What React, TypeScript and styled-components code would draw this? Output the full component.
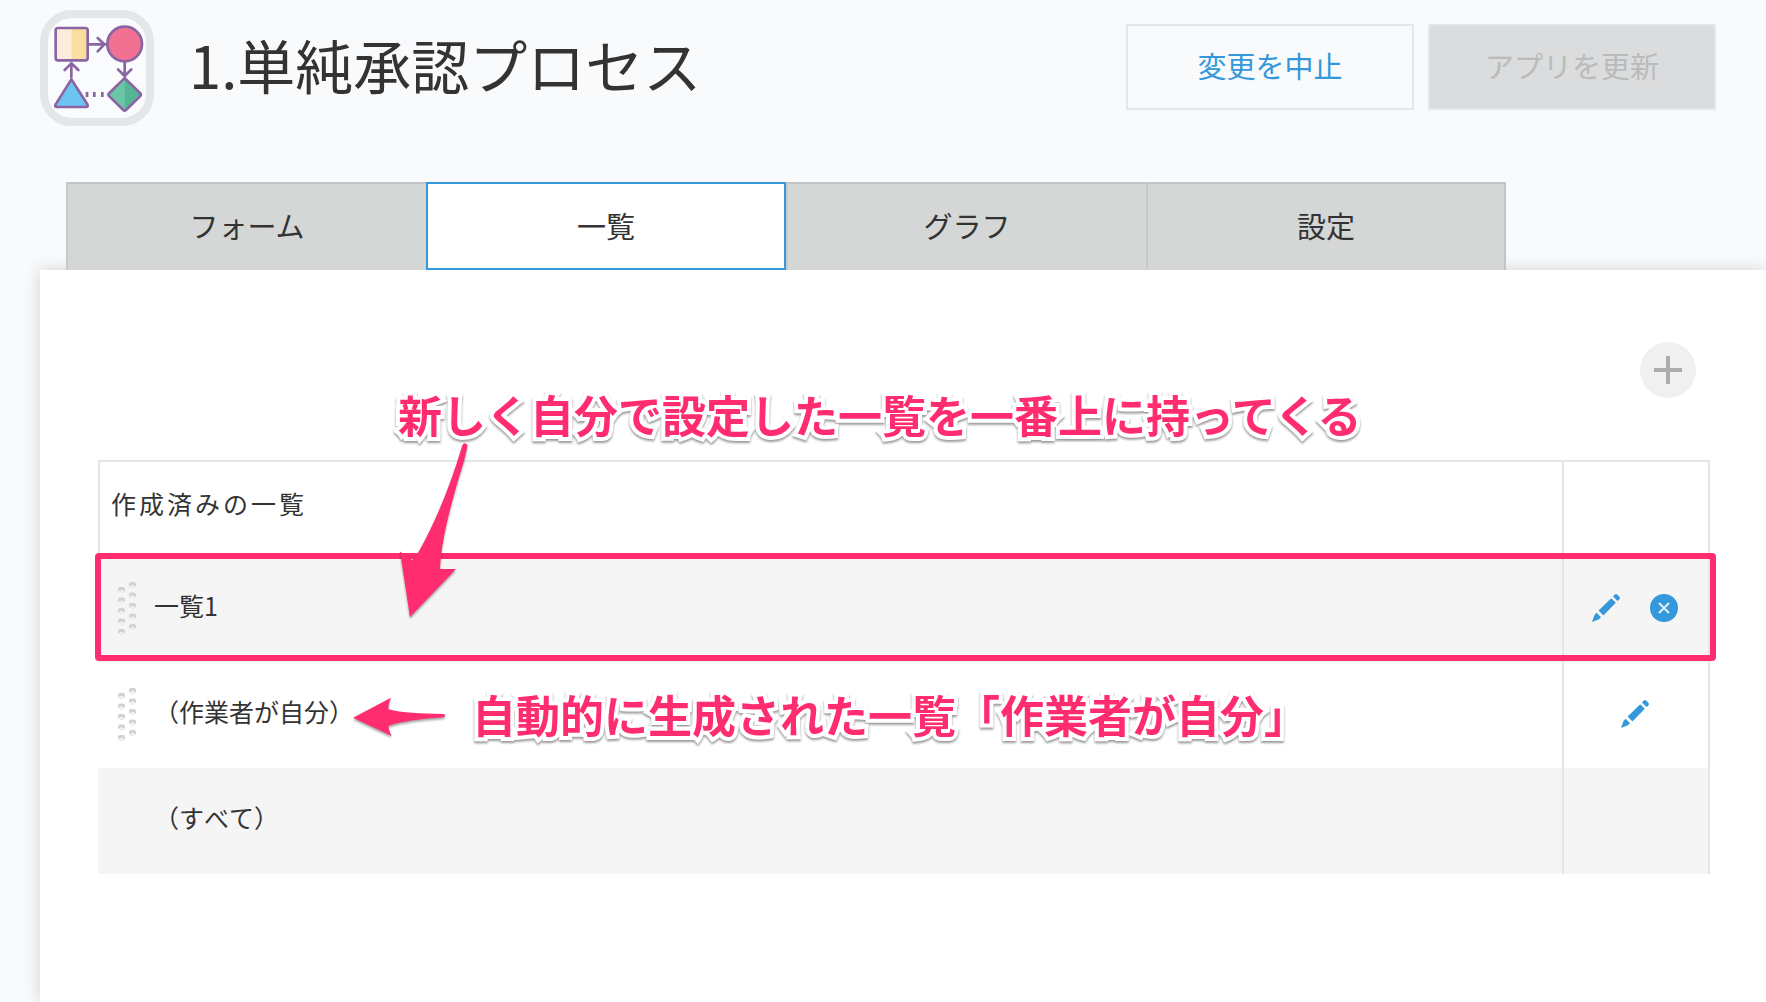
import React from "react";
import styled, { createGlobalStyle } from "styled-components";

const GlobalStyle = createGlobalStyle`
  *, *::before, *::after { box-sizing: border-box; }
  html, body { margin: 0; background: #f9fafc; }
  body {
    color: #333;
    font-family: "Noto Sans CJK JP", sans-serif;
    font-kerning: none;
    overflow-x: hidden;
  }
  button { font-family: inherit; margin: 0; padding: 0; }
`;

const blue = "#3498db";
const pink = "#ff2d6f";
const line = "#e3e7e8";

const Page = styled.div`
  display: flex;
  flex-direction: column;
  min-height: 100vh;
`;

const Header = styled.header`
  display: flex;
  align-items: flex-start;
  padding: 10px 50px 56px 40px;
`;

const AppIcon = styled.svg`
  display: block;
  flex: none;
  width: 114px;
  height: 116px;
`;

const Title = styled.h1`
  flex: 1;
  margin: 0 0 0 35px;
  font-size: 58px;
  font-weight: 400;
  line-height: 108px;
  white-space: nowrap;
`;

const Actions = styled.div`
  display: flex;
  gap: 14px;
  padding-top: 14px;
`;

const ActionButton = styled.button<{ $muted?: boolean }>`
  width: 288px;
  height: 86px;
  padding-bottom: 4px;
  border: 2px solid ${line};
  background: ${(p) => (p.$muted ? "#dbdcdd" : "transparent")};
  color: ${(p) => (p.$muted ? "#b9bbbb" : blue)};
  font-size: 29px;
  line-height: 40px;
`;

const Tabs = styled.nav`
  display: grid;
  grid-template-columns: repeat(4, 1fr);
  width: 1440px;
  max-width: calc(100% - 66px);
  margin-left: 66px;
`;

const Tab = styled.button<{ $active?: boolean }>`
  height: 88px;
  padding-bottom: ${(p) => (p.$active ? "2px" : "4px")};
  border: 2px solid ${(p) => (p.$active ? blue : "#c1c5c5")};
  border-left-color: ${(p) => (p.$active ? blue : "#c6caca")};
  border-right-width: ${(p) => (p.$active ? "2px" : "0")};
  border-bottom-width: ${(p) => (p.$active ? "2px" : "0")};
  background: ${(p) => (p.$active ? "#fff" : "#d4d7d6")};
  color: #333;
  font-size: 29px;
  line-height: 40px;
  &:last-child { border-right-width: 2px; }
`;

const Panel = styled.main`
  flex: 1;
  margin-left: 40px;
  padding: 72px 56px 56px 58px;
  background: #fff;
  box-shadow: 0 0 16px rgba(0, 0, 0, 0.16);
`;

const TabStrip = styled.div`
  position: relative;
  z-index: 1;
`;

const Toolbar = styled.div`
  display: flex;
  justify-content: flex-end;
  padding: 0 14px 62px 0;
`;

const AddButton = styled.button`
  display: grid;
  place-items: center;
  width: 56px;
  height: 56px;
  border: 0;
  border-radius: 50%;
  background: #f0f0f0;
`;

const ListArea = styled.div`
  position: relative;
`;

const ViewTable = styled.table`
  width: 100%;
  table-layout: fixed;
  border-collapse: separate;
  border-spacing: 0;
  font-size: 25px;
  line-height: 36px;
`;

const HeadCell = styled.th<{ $actions?: boolean }>`
  width: ${(p) => (p.$actions ? "148px" : "auto")};
  height: 96px;
  padding: 0 0 12px 11px;
  border: 2px solid ${line};
  border-width: ${(p) => (p.$actions ? "2px 2px 0 2px" : "2px 0 0 2px")};
  font-weight: 400;
  letter-spacing: 3px;
  text-align: left;
`;

const Row = styled.tr<{ $shaded?: boolean }>`
  background: ${(p) => (p.$shaded ? "#f5f5f5" : "#fff")};
`;

const NameCell = styled.td`
  height: 106px;
  padding: 0 0 0 20px;
`;

const ActionCell = styled.td`
  padding: 0 2px 2px 0;
  border: solid ${line};
  border-width: 0 2px;
`;

const NameLine = styled.div`
  display: flex;
  align-items: center;
  gap: 18px;
`;

const HandleSlot = styled.span`
  display: block;
  width: 18px;
  height: 54px;
`;

const ViewName = styled.span`
  padding-bottom: 8px;
`;

const IconGroup = styled.div`
  display: flex;
  justify-content: center;
  gap: 30px;
`;

const IconButton = styled.button`
  display: block;
  width: 28px;
  height: 28px;
  border: 0;
  background: none;
  svg { display: block; }
`;

const Highlight = styled.div`
  position: absolute;
  top: 93px;
  left: -3px;
  right: -6px;
  height: 108px;
  border: 6px solid ${pink};
  border-radius: 4px;
  pointer-events: none;
`;

const Note = styled.p<{ $x: number; $y: number }>`
  position: absolute;
  left: ${(p) => p.$x}px;
  top: ${(p) => p.$y}px;
  margin: 0;
  color: ${pink};
  font-size: 44px;
  font-weight: 700;
  font-kerning: normal;
  line-height: 64px;
  white-space: nowrap;
  -webkit-text-stroke: 8px #fff;
  paint-order: stroke fill;
  filter: drop-shadow(0 2px 1px rgba(0, 0, 0, 0.4));
`;

const Arrows = styled.svg`
  position: absolute;
  left: 292px;
  top: -24px;
  width: 64px;
  height: 310px;
  overflow: visible;
  pointer-events: none;
  filter: drop-shadow(0 2px 1px rgba(0, 0, 0, 0.35));
`;

function ProcessIcon() {
  return (
    <AppIcon viewBox="60 30 342 348" preserveAspectRatio="none" aria-hidden="true">
      <rect x="72" y="42" width="318" height="324" rx="84" fill="#fafbfd" stroke="#e3e7e8" strokeWidth="24" />
      <g stroke="#8b65a3" strokeWidth="8" strokeLinejoin="round" strokeLinecap="round" fill="none">
        <path d="M207 133H256M233 114L253 133L233 154" />
        <path d="M154 232V190M134 210L154 190L175 210" />
        <path d="M314 188V230M294 208L314 228L334 208" />
        <path d="M201 276V291M223 276V291M247 276V291" strokeLinecap="butt" />
        <path d="M111 84H154V181H111Q106 181 106 176V89Q106 84 111 84Z" fill="#fdecdc" stroke="none" />
        <path d="M154 84H197Q203 84 203 90V175Q203 181 197 181H154Z" fill="#f8dfa0" stroke="none" />
        <rect x="107" y="84" width="96" height="97" rx="7" />
        <circle cx="314" cy="132" r="52" fill="#f27193" />
        <path d="M154 238L202 313Q206 321 198 321H110Q103 321 107 313Z" fill="#6cc5f1" />
        <path d="M314 236L360 280Q364 284 360 288L314 332L268 288Q264 284 268 280Z" fill="#54b694" stroke="none" />
        <path d="M314 236L268 280Q264 284 268 288L314 332Z" fill="#6ac6a5" stroke="none" />
        <path d="M310 238Q314 234 318 238L360 279Q365 284 360 289L318 330Q314 334 310 330L268 289Q263 284 268 279Z" />
      </g>
    </AppIcon>
  );
}

function Pencil() {
  return (
    <svg width="28" height="28" viewBox="0 0 28 28" fill={blue} aria-hidden="true">
      <path d="M21 2.4L22.6 .8Q24 -.5 25.2 .6L27.5 2.9Q28.5 4 27.3 5.4L25.6 7Z" />
      <path d="M19.2 4.2L23.8 8.8L11.4 21.4L6.6 16.6Z" />
      <path d="M4.6 18.8L9 23.2L7 25.2L0 28L2.6 20.8Z" />
    </svg>
  );
}

function CircleX() {
  return (
    <svg width="28" height="28" viewBox="0 0 28 28" aria-hidden="true">
      <circle cx="14" cy="14" r="14" fill={blue} />
      <path d="M9 9L19 19M19 9L9 19" stroke="#e4f2fb" strokeWidth="2" />
    </svg>
  );
}

function DragHandle() {
  const bump = (x: number, y: number) => (
    <g key={`${x}-${y}`}>
      <path d={`M${x} ${y + 5}V${y + 2}Q${x} ${y} ${x + 2} ${y}H${x + 5}Q${x + 7} ${y} ${x + 7} ${y + 2}V${y + 5}Q${x + 3.5} ${y + 1} ${x} ${y + 5}Z`} fill="#d2d2d2" />
      <path d={`M${x + 1} ${y + 6}Q${x + 3.5} ${y + 1} ${x + 6} ${y + 6}Z`} fill="#ececec" />
    </g>
  );
  return (
    <svg width="18" height="54" viewBox="0 0 18 54" aria-hidden="true">
      {[5, 15.5, 26, 36.5, 47].map((y) => bump(0, y))}
      {[0, 10.5, 21, 31.5, 42].map((y) => bump(11, y))}
    </svg>
  );
}

const tabs = ["フォーム", "一覧", "グラフ", "設定"];

const views = [
  { name: "一覧1", movable: true, editable: true, removable: true },
  { name: "（作業者が自分）", movable: true, editable: true, removable: false },
  { name: "（すべて）", movable: false, editable: false, removable: false },
];

export default function App() {
  return (
    <Page>
      <GlobalStyle />
      <Header>
        <ProcessIcon />
        <Title>1.単純承認プロセス</Title>
        <Actions>
          <ActionButton type="button">変更を中止</ActionButton>
          <ActionButton type="button" $muted disabled>
            アプリを更新
          </ActionButton>
        </Actions>
      </Header>
      <TabStrip>
        <Tabs>
          {tabs.map((label) => (
            <Tab key={label} type="button" $active={label === "一覧"}>
              {label}
            </Tab>
          ))}
        </Tabs>
      </TabStrip>
      <Panel>
        <Toolbar>
          <AddButton type="button" aria-label="一覧を追加">
            <svg width="28" height="28" viewBox="0 0 28 28" aria-hidden="true">
              <path d="M14 0V28M0 14H28" stroke="#adadad" strokeWidth="4" />
            </svg>
          </AddButton>
        </Toolbar>
        <ListArea>
          <ViewTable>
            <thead>
              <tr>
                <HeadCell scope="col">作成済みの一覧</HeadCell>
                <HeadCell scope="col" $actions aria-label="操作" />
              </tr>
            </thead>
            <tbody>
              {views.map((view, index) => (
                <Row key={view.name} $shaded={index % 2 === 0}>
                  <NameCell>
                    <NameLine>
                      <HandleSlot>{view.movable && <DragHandle />}</HandleSlot>
                      <ViewName>{view.name}</ViewName>
                    </NameLine>
                  </NameCell>
                  <ActionCell>
                    <IconGroup>
                      {view.editable && (
                        <IconButton type="button" aria-label="編集">
                          <Pencil />
                        </IconButton>
                      )}
                      {view.removable && (
                        <IconButton type="button" aria-label="削除">
                          <CircleX />
                        </IconButton>
                      )}
                    </IconGroup>
                  </ActionCell>
                </Row>
              ))}
            </tbody>
          </ViewTable>
          <Highlight />
          <Arrows viewBox="390 436 64 310" fill={pink} aria-hidden="true">
            <path d="M462.5 445Q464.5 441.5 467.5 445Q467 449 464 461Q441 534 440 569H456L410 617L400 551.5L412.5 560L418 553Q444 507 462.5 445Z" />
            <path d="M353 717.7L391 697.7Q388 704 388.5 709.3C402 713 420 713.5 443.5 714Q447 715.7 443.5 717.3C420 719 404 721 388.5 725.7Q388.5 730 391.7 736Z" />
          </Arrows>
          <Note $x={300} $y={-78}>新しく自分で設定した一覧を一番上に持ってくる</Note>
          <Note $x={374} $y={222}>自動的に生成された一覧「作業者が自分」</Note>
        </ListArea>
      </Panel>
    </Page>
  );
}
